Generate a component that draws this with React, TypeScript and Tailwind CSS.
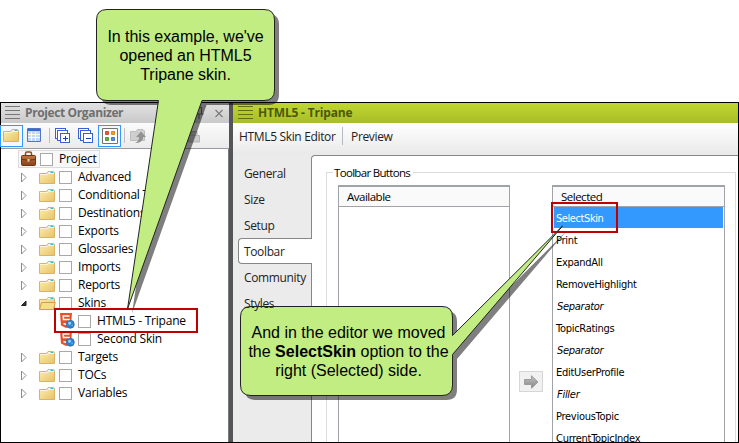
import React from 'react';

const tree = ['Advanced', 'Conditional Text', 'Destinations', 'Exports', 'Glossaries', 'Imports', 'Reports'];
const tail = ['Targets', 'TOCs', 'Variables'];
const items = [
  'Print', 'ExpandAll', 'RemoveHighlight', 'Separator', 'TopicRatings', 'Separator',
  'EditUserProfile', 'Filler', 'PreviousTopic', 'CurrentTopicIndex',
];

function Lines({ color }: { color: string }) {
  return (
    <svg width="15" height="14" className="shrink-0" stroke={color} shapeRendering="crispEdges">
      <path d="M0 .5H15M0 4.5H15M0 8.5H15M0 12.5H15" />
    </svg>
  );
}

function Defs() {
  return (
    <svg width="0" height="0" className="absolute">
      <defs>
        <linearGradient id="fold" x1="0" y1="0" x2="1" y2="1">
          <stop offset="0" stopColor="#fdeeb4" />
          <stop offset="1" stopColor="#e8c265" />
        </linearGradient>
        <linearGradient id="case" x1="0" y1="0" x2="0" y2="1">
          <stop offset="0" stopColor="#c47742" />
          <stop offset="1" stopColor="#86401a" />
        </linearGradient>
        <linearGradient id="arrow" x1="0" y1="0" x2="0" y2="1">
          <stop offset="0" stopColor="#c4c4c4" />
          <stop offset="1" stopColor="#858585" />
        </linearGradient>
      </defs>
    </svg>
  );
}

function Folder({ open = false }: { open?: boolean }) {
  return (
    <svg width="17" height="15" viewBox="0 0 17 15" className="shrink-0">
      <path d="M.5 13.5V3.5H7.5L9 1.5H14.5L15.5 3V13.5Z" fill="url(#fold)" stroke="#d9b468" />
      <path d="M9.5 2.5h4.5" stroke="#fff" />
      <path d="M11.5 2.5h2.5" stroke="#39b8cf" />
      {open ? (
        <path d="M.5 13.5L2.5 6.5H16.3L14.5 13.5Z" fill="#f6dc91" stroke="#cfa04c" />
      ) : (
        <path d="M1 4.5H8.5L10 3.5H15" stroke="#fff6cf" fill="none" />
      )}
    </svg>
  );
}

function Check() {
  return <span className="size-[13px] shrink-0 border border-[#a8a8a8] bg-white" />;
}

function SkinIcon() {
  return (
    <svg width="15" height="16" viewBox="0 0 15 16" className="shrink-0">
      <path d="M0 0H12L11 12.5L6 15L1 12.5Z" fill="#e8502a" />
      <path d="M9.5 3H3.2L3.5 6.5H9L8.7 10.5L6 11.5L3.5 10.5" stroke="#fff" strokeWidth="1.5" fill="none" />
      <circle cx="10.3" cy="11.3" r="4" fill="#2f82cd" stroke="#1c5fa6" strokeWidth=".6" />
      <path d="M8 9.5L10 8.5L11.5 10L10 12L8.5 11.5Z M11.5 12L13 11.5L12 13.5Z" fill="#8fd0f7" />
    </svg>
  );
}

function Row({ label }: { label: string }) {
  return (
    <div className="flex h-[18px] items-center pl-5">
      <svg width="8" height="10" className="mr-[10px] shrink-0">
        <path d="M.5 1L5 5.5L.5 10Z" fill="#fff" stroke="#8c8c8c" />
      </svg>
      <Folder />
      <span className="ml-[3px] flex"><Check /></span>
      <span className="ml-[6px] whitespace-nowrap">{label}</span>
    </div>
  );
}

function Stack({ plus = false }: { plus?: boolean }) {
  return (
    <svg width="16" height="16" fill="#fff" stroke="#3c5fd0" shapeRendering="crispEdges">
      <path d="M.5 .5H10.5V10.5H.5Z" />
      <path d="M2.5 2.5H12.5V12.5H2.5Z" />
      <path d="M5.5 5.5H14.5V14.5H5.5Z" />
      <path d={plus ? 'M8 10.5H13M10.5 8V13' : 'M8 10.5H13'} stroke="#1c3fae" />
    </svg>
  );
}

function Organizer() {
  return (
    <div className="flex w-[228px] shrink-0 flex-col bg-white">
      <div className="flex h-5 shrink-0 items-center bg-linear-to-b from-[#e2e2e2] to-[#c9c9c9] pl-1">
        <Lines color="#777777" />
        <span className="ml-[5px] flex-1 whitespace-nowrap text-[12px] font-bold tracking-[-0.38px] text-[#6f6f6f]">Project Organizer</span>
        <svg width="34" height="14" fill="none" stroke="#606060" className="mr-[2px]">
          <path d="M3.5 7.5V1.5H8.5V7.5M1.5 8H10.5M6 8V13" />
          <path d="M22.5 4L29.5 11M29.5 4L22.5 11" stroke="#7c7c7c" strokeWidth="1.2" />
        </svg>
      </div>
      <div className="flex h-[26px] shrink-0 items-center border-b border-[#9a9aa2] bg-linear-to-b from-[#fbfbfb] to-[#ebebeb]">
        <div className="-ml-px flex h-[22px] w-[23px] items-center justify-center border border-[#3399ff] bg-[#f4f8fd]"><Folder /></div>
        <svg width="15" height="15" className="ml-[4px]">
          <path d="M.5 .5H13.5V13.5H.5Z" fill="#c4d7f7" stroke="#5275c9" />
          <path d="M1 2H13" stroke="#3e68c3" strokeWidth="2" />
          <path d="M1 6.5H13M1 9.5H13M4.5 4V13M8.5 4V13" stroke="#fff" />
        </svg>
        <i className="ml-[7px] h-[15px] w-px bg-[#bfbfbf]" />
        <span className="ml-[5px]"><Stack plus /></span>
        <span className="ml-[7px]"><Stack /></span>
        <div className="ml-[4px] flex h-[22px] w-[23px] items-center justify-center border border-[#3399ff] bg-[#f4f8fd]">
          <svg width="16" height="16">
            <path d="M.5 .5H15.5V15.5H.5Z" fill="#fff" stroke="#727272" />
            <path d="M3.5 3.5H6.5V6.5H3.5Z" fill="#e9573d" stroke="#d34b33" />
            <path d="M9.5 3.5H12.5V6.5H9.5Z" fill="#f29a2e" stroke="#df8722" />
            <path d="M3.5 9.5H6.5V12.5H3.5Z" fill="#62b442" stroke="#4f9a34" />
            <path d="M9.5 9.5H12.5V12.5H9.5Z" fill="#5a91e6" stroke="#4277cc" />
          </svg>
        </div>
        <i className="ml-[3px] h-[15px] w-px bg-[#bfbfbf]" />
        <svg width="18" height="16" className="ml-[5px]">
          <path d="M.5 12.5V3.5H6L7.5 1.5H13L14.5 3V12.5Z" fill="#cfcfcf" stroke="#bdbdbd" />
          <path d="M5 15C8 14 9 12 9 9H6L11 3.5L16 9H13C13 13 10 15 5 15Z" fill="#929292" />
        </svg>
        <svg width="14" height="14" className="ml-[39px]">
          <path d="M1.5 6.5H12.5V13H1.5ZM4 6V2.5H10V6" fill="#ccc" stroke="#b5b5b5" />
        </svg>
      </div>
      <div className="flex-1 border-r border-[#777b84] pt-[1px] text-[12px] tracking-[-0.22px]">
        <div className="ml-[17px] flex h-[18px] w-[82px] items-center border border-[#dcdcdc] bg-[#f8f8f8] pl-[2px]">
          <svg width="15" height="16" viewBox="0 0 15 16">
            <path d="M4.5 5V2.5Q4.5 1 6 1H9Q10.5 1 10.5 2.5V5" fill="none" stroke="#8c4a21" strokeWidth="1.5" />
            <rect x=".5" y="4.5" width="14" height="10" rx="1" fill="url(#case)" stroke="#71350f" />
            <path d="M1 8.5Q7.5 10 14 8.5" stroke="#6a300d" fill="none" />
            <rect x="6.5" y="8" width="2" height="2.5" fill="#f0d2a2" />
          </svg>
          <span className="ml-[4px] flex"><Check /></span>
          <span className="ml-[6px]">Project</span>
        </div>
        {tree.map((label) => <Row key={label} label={label} />)}
        <div className="flex h-[18px] items-center pl-5">
          <svg width="8" height="10" className="mr-[10px] shrink-0"><path d="M.5 7.5H5V3Z" fill="#333" stroke="#222" /></svg>
          <Folder open />
          <span className="ml-[3px] flex"><Check /></span>
          <span className="ml-[6px]">Skins</span>
        </div>
        {['HTML5 - Tripane', 'Second Skin'].map((label) => (
          <div key={label} className="flex h-[18px] items-center pl-[59px]">
            <SkinIcon />
            <span className="ml-[3px] flex"><Check /></span>
            <span className="ml-[6px]">{label}</span>
          </div>
        ))}
        {tail.map((label) => <Row key={label} label={label} />)}
      </div>
    </div>
  );
}

function Editor() {
  return (
    <div className="flex min-w-0 flex-1 flex-col bg-[#ebebeb]">
      <div className="flex h-5 shrink-0 items-center bg-linear-to-b from-[#c0d730] to-[#a8bd28] pl-[5px]">
        <Lines color="#626f17" />
        <span className="ml-[5px] text-[12px] font-bold tracking-[-0.18px] text-[#4c570f]">HTML5 - Tripane</span>
      </div>
      <div className="flex h-[32px] shrink-0 bg-linear-to-b from-white to-[#e9e9e9] pl-[6px] pt-1 text-[12px] leading-[20px] tracking-[-0.34px] text-[#222]">
        <span className="w-[103px] whitespace-nowrap">HTML5 Skin Editor</span>
        <i className="h-[18px] w-px bg-[#b5bac5]" />
        <span className="ml-2">Preview</span>
      </div>
      <div className="flex min-h-0 flex-1">
        <div className="relative z-[1] -mr-px w-[79px] shrink-0 pl-[5px] pt-[6px] text-[12px] leading-[26px] tracking-[-0.36px] text-[#222]">
          <div className="h-[26px] pl-[6px]">General</div>
          <div className="h-[26px] pl-[6px]">Size</div>
          <div className="h-[25px] pl-[6px]">Setup</div>
          <div className="h-[26px] rounded-l-[4px] border border-r-0 border-[#868686] bg-white pl-[5px] leading-[26px]">Toolbar</div>
          <div className="h-[26px] pl-[6px] pt-px">Community</div>
          <div className="h-[26px] pl-[6px] pt-px">Styles</div>
        </div>
        <div className="flex-1 rounded-tl-[4px] border-l border-t border-[#868686] bg-white pl-[14px] pr-[2px] pt-[16px]">
          <div className="relative flex h-full border border-b-0 border-[#dcdcdc] pl-[11px] pt-[12px]">
            <span className="absolute -top-[8px] left-[6px] bg-white pl-px pr-[3px] text-[11.500px] leading-[16px] tracking-[-0.68px]">Toolbar Buttons</span>
            <div className="h-full w-[172px] shrink-0 border border-b-0 border-t-2 border-[#a0a3a8]">
              <div className="h-5 border-b border-[#a0a3a8] bg-[#fafafb] pl-[8px] text-[11.500px] leading-[20px] tracking-[-0.5px]">Available</div>
            </div>
            <div className="flex w-[42px] shrink-0 justify-center pt-[186px]">
              <div className="flex h-[21px] w-6 items-center justify-center border border-[#d6d6d6] bg-[#f1f1f1]">
                <svg width="15" height="14"><path d="M.5 4.5H7.5V.8L14 7L7.5 13.200V9.5H.5Z" fill="url(#arrow)" stroke="#9b9b9b" /></svg>
              </div>
            </div>
            <div className="h-full w-[173px] shrink-0 overflow-hidden border border-b-0 border-t-2 border-[#a0a3a8]">
              <div className="h-5 border-b border-[#a0a3a8] bg-[#fafafb] pl-[8px] text-[11.500px] leading-[20px] tracking-[-0.5px]">Selected</div>
              <div className="font-['DejaVu_Sans_Condensed','DejaVu_Sans',sans-serif] text-[11px] leading-[23px] [font-stretch:condensed] tracking-[-0.28px]">
                <div className="mx-px mb-px h-[21px] bg-[#3399ff] pl-[2px] tracking-[-0.42px] text-white">SelectSkin</div>
                {items.map((t, i) => (
                  <div key={i} className={t === 'Separator' || t === 'Filler' ? 'h-[22px] pl-[4px] italic' : 'h-[22px] pl-[3px]'}>{t}</div>
                ))}
              </div>
            </div>
          </div>
        </div>
      </div>
    </div>
  );
}

const bubbleA = 'M107 9.5H264Q274.5 9.5 274.5 20V90Q274.5 100.5 264 100.5H202L127.5 309L158.5 100.5H107Q96.5 100.5 96.5 90V20Q96.5 9.5 107 9.5Z';
const bubbleB = 'M251 306.5H442Q452.5 306.5 452.5 317V335.5L562.5 226L452.5 354.5V385Q452.5 395.5 442 395.5H251Q240.5 395.5 240.5 385V317Q240.5 306.5 251 306.5Z';

export default function App() {
  return (
    <div className="relative h-[443px] w-[739px] overflow-hidden bg-white pt-[102px] font-['Open_Sans','Noto_Sans',sans-serif] text-black">
      <Defs />
      <div className="flex h-[341px] border border-black">
        <Organizer />
        <div className="w-[4px] shrink-0 bg-[#555555]" />
        <Editor />
      </div>
      <div className="absolute left-[54px] top-[308px] h-[25px] w-[144px] border-2 border-[#c00000]" />
      <div className="absolute left-[551px] top-[202px] h-[31px] w-[67px] border-2 border-[#c00000]" />
      <svg width="739" height="443" className="absolute left-0 top-0">
        <path d={bubbleA} transform="translate(4.5 4.5)" fill="#000" fillOpacity=".5" />
        <path d={bubbleB} transform="translate(4.5 4.5)" fill="#000" fillOpacity=".5" />
        <path d={bubbleA} fill="#c1ed83" stroke="#222" />
        <path d={bubbleB} fill="#c1ed83" stroke="#222" />
      </svg>
      <div className="absolute left-[96.500px] top-[27px] w-[178px] whitespace-nowrap text-center font-['Liberation_Sans',Arial,sans-serif] text-[16px] leading-[19px] tracking-[-0.03px]">
        <div>In this example, we've</div><div>opened an HTML5</div><div>Tripane skin.</div>
      </div>
      <div className="absolute left-[240.500px] top-[323px] w-[216px] whitespace-nowrap text-center font-['Liberation_Sans',Arial,sans-serif] text-[16px] leading-[19px]">
        <div>And in the editor we moved</div><div>the <b>SelectSkin</b> option to the</div><div>right (Selected) side.</div>
      </div>
    </div>
  );
}
